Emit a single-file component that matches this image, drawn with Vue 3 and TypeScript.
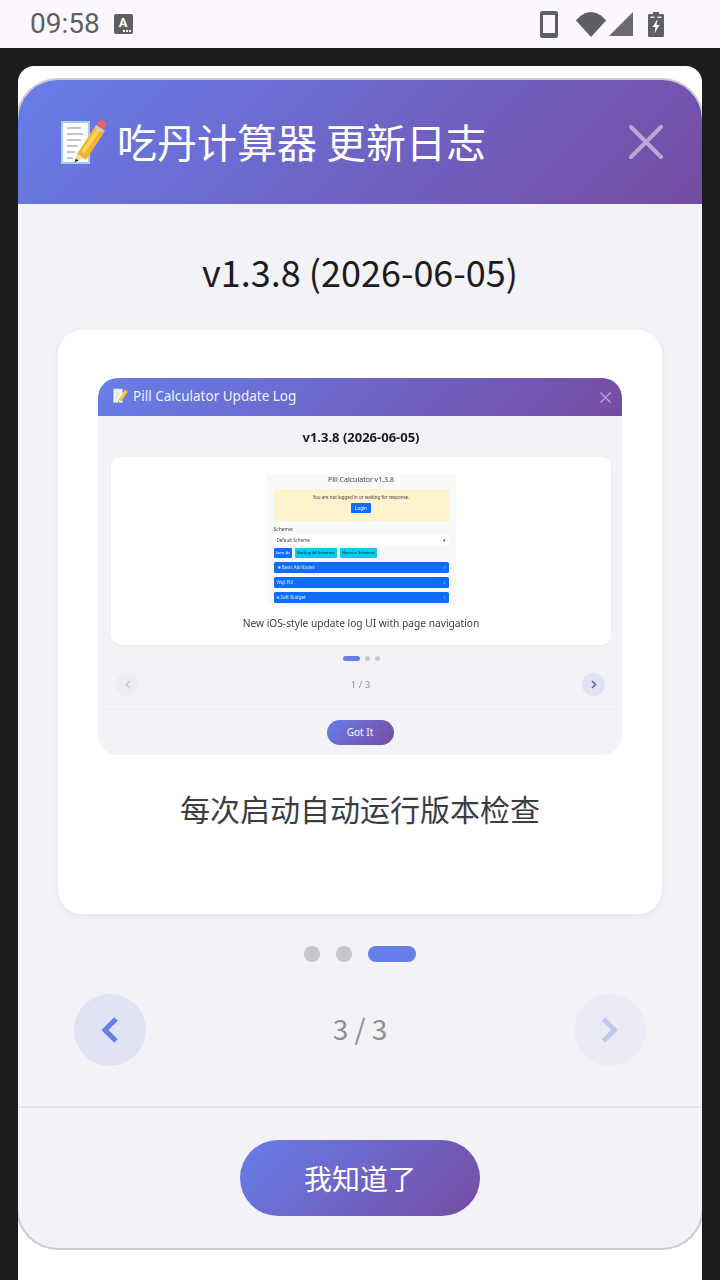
<script setup lang="ts">
const miniBars = ['★ Basic Attributes', 'Waji Pill', '♣ Soft Budget'];
</script>

<template>
  <div class="screen">
    <svg class="defs" width="0" height="0">
      <symbol id="memo" viewBox="0 0 46 46">
        <rect x="2" y="3" width="27" height="41" fill="#fff" stroke="#9fd3f2" stroke-width="2" />
        <path d="M7 9h14M7 15h16M7 21h14M7 27h11M7 33h8M7 39h6" stroke="#8c8c94" stroke-width="1.2" fill="none" />
        <path d="M17 35 36 6l9 6-19 29z" fill="#f7b32b" />
        <path d="M22 31 38 8l3 2-17 25z" fill="#fcd462" />
        <path d="M17 35l-2.500 8.500 8.500-4z" fill="#f3d9b0" />
        <path d="M14.500 43.500l1.200-4 3 2z" fill="#3a3a3a" />
        <path d="M36 7l3-4.500a3 3 0 0 1 4-1l2 1.300a3 3 0 0 1 1 4l-2.500 4.500z" fill="#e8626a" />
        <path d="M36 6l8.500 5.500-1.300 2.200-8.500-5.500z" fill="#c9ced6" />
      </symbol>
    </svg>

    <header class="status">
      <div class="status-left">
        <span class="clock">09:58</span>
        <span class="ime">A<i class="ime-dots"></i></span>
      </div>
      <div class="status-right">
        <svg class="ic-phone" width="18" height="27" viewBox="0 0 18 27">
          <path fill-rule="evenodd" d="M2.500 0h13A2.500 2.500 0 0 1 18 2.500v22a2.500 2.500 0 0 1-2.500 2.500h-13A2.500 2.500 0 0 1 0 24.500v-22A2.500 2.500 0 0 1 2.500 0zM3 4v18h12V4z" fill="#5f5f62" />
        </svg>
        <svg class="ic-wifi" width="30" height="25" viewBox="0 0 30 25">
          <path d="M0 8.500C4 3.500 9.500 0 15 0s11 3.500 15 8.500L15 25z" fill="#5f5f62" />
        </svg>
        <svg class="ic-signal" width="24" height="24" viewBox="0 0 24 24">
          <path d="M24 0v24H0z" fill="#6b6b6e" />
        </svg>
        <svg class="ic-battery" width="16" height="25" viewBox="0 0 16 25">
          <path d="M5 0h6v2h3.500A1.500 1.500 0 0 1 16 3.500v20a1.500 1.500 0 0 1-1.500 1.500h-13A1.500 1.500 0 0 1 0 23.500v-20A1.500 1.500 0 0 1 1.500 2H5z" fill="#5f5f62" />
          <path d="M9.500 7 4.500 15h3l-1 6.500 5-8.500h-3z" fill="#fff" />
          <path d="M2.500 4.500h4v1.500h-4zM9.500 4.500h4v1.500h-4z" fill="#fff" opacity=".85" />
        </svg>
      </div>
    </header>

    <main class="stage">
      <div class="panel">
        <section class="modal">
          <div class="modal-head">
            <div class="modal-title">
              <svg class="memo" width="46" height="46"><use href="#memo" /></svg>
              <span class="modal-name">吃丹计算器 更新日志</span>
            </div>
            <svg class="close" width="34" height="34" viewBox="0 0 34 34">
              <path d="M2 2l30 30M32 2 2 32" stroke="#fff" stroke-opacity=".5" stroke-width="4" stroke-linecap="round" />
            </svg>
          </div>

          <div class="modal-body">
            <h2 class="version">v1.3.8 (2026-06-05)</h2>

            <div class="card">
              <div class="shot">
                <div class="shot-head">
                  <div class="shot-title">
                    <svg width="15" height="15"><use href="#memo" /></svg>
                    <span>Pill Calculator Update Log</span>
                  </div>
                  <svg width="11" height="11" viewBox="0 0 11 11">
                    <path d="M.5.5l10 10M10.500.5l-10 10" stroke="#fff" stroke-opacity=".55" stroke-width="1.200" />
                  </svg>
                </div>
                <div class="shot-body">
                  <div class="shot-version">v1.3.8 (2026-06-05)</div>
                  <div class="shot-card">
                    <div class="tiny">
                      <div class="tiny-title">Pill Calculator v1.3.8</div>
                      <div class="tiny-alert">
                        <span>You are not logged in or waiting for response.</span>
                        <b class="tiny-login">Login</b>
                      </div>
                      <div class="tiny-label">Scheme:</div>
                      <div class="tiny-select"><span>Default Scheme</span><span>▾</span></div>
                      <div class="tiny-row">
                        <b class="tiny-btn blue">Save As</b>
                        <b class="tiny-btn cyan wide">Backup All Schemes</b>
                        <b class="tiny-btn cyan">Restore Schemes</b>
                      </div>
                      <div class="tiny-bars">
                        <div v-for="bar in miniBars" :key="bar" class="tiny-bar">
                          <span>{{ bar }}</span><span>›</span>
                        </div>
                      </div>
                    </div>
                    <p class="shot-caption">New iOS-style update log UI with page navigation</p>
                  </div>
                  <div class="shot-dots">
                    <i class="shot-dot on"></i><i class="shot-dot"></i><i class="shot-dot"></i>
                  </div>
                  <div class="shot-nav">
                    <span class="shot-arrow off">
                      <svg width="8" height="9" viewBox="0 0 8 9"><path d="M6 1 2.500 4.500 6 8" stroke="#667eea" stroke-width="1.700" fill="none" /></svg>
                    </span>
                    <span class="shot-page">1 / 3</span>
                    <span class="shot-arrow">
                      <svg width="8" height="9" viewBox="0 0 8 9"><path d="M2 1l3.500 3.500L2 8" stroke="#5a67c9" stroke-width="1.700" fill="none" /></svg>
                    </span>
                  </div>
                </div>
                <div class="shot-foot"><span class="shot-btn">Got It</span></div>
              </div>
              <p class="caption">每次启动自动运行版本检查</p>
            </div>

            <div class="dots">
              <i class="dot"></i><i class="dot"></i><i class="dot on"></i>
            </div>

            <div class="nav">
              <button class="arrow">
                <svg width="24" height="30" viewBox="0 0 24 30"><path d="M18 4 7 15l11 11" stroke="#667eea" stroke-width="5" fill="none" /></svg>
              </button>
              <span class="page">3 / 3</span>
              <button class="arrow off">
                <svg width="24" height="30" viewBox="0 0 24 30"><path d="M5.500 4l11 11-11 11" stroke="#667eea" stroke-width="5" fill="none" /></svg>
              </button>
            </div>
          </div>

          <div class="modal-foot">
            <button class="ok">我知道了</button>
          </div>
        </section>
      </div>
    </main>
  </div>
</template>

<style>
html,
body {
  margin: 0;
  background: #1c1c1c;
}
</style>

<style scoped>
.screen {
  width: 720px;
  height: 1280px;
  display: flex;
  flex-direction: column;
  overflow: hidden;
  background: #1c1c1c;
  font-family: "Noto Sans CJK SC", "Noto Sans", sans-serif;
}

.defs {
  position: absolute;
}

.status {
  height: 48px;
  flex: none;
  display: flex;
  align-items: center;
  justify-content: space-between;
  padding: 0 56px 0 30px;
  background: #fdf7fe;
}

.status-left {
  display: flex;
  align-items: center;
  gap: 14px;
}

.clock {
  font-family: Roboto, sans-serif;
  font-size: 28px;
  line-height: 48px;
  color: #5f5f62;
}

.ime {
  position: relative;
  width: 19px;
  height: 20px;
  border-radius: 2px;
  background: #5f5f62;
  color: #fff;
  font-family: Roboto, sans-serif;
  font-size: 13px;
  font-weight: 700;
  line-height: 17px;
  text-align: center;
}

.ime-dots {
  position: absolute;
  right: 2px;
  bottom: 2px;
  width: 2px;
  height: 2px;
  background: #fff;
  box-shadow: -3px 0 0 #fff, -6px 0 0 #fff;
}

.status-right {
  display: flex;
  align-items: center;
}

.ic-wifi {
  margin-left: 18px;
}

.ic-signal {
  margin-left: 3px;
}

.ic-battery {
  margin-left: 15px;
}

.stage {
  flex: 1;
  display: flex;
  padding: 18px 18px 0;
}

.panel {
  flex: 1;
  padding-top: 14px;
  overflow: hidden;
  border-radius: 16px 16px 0 0;
  background: #fff;
}

.modal {
  height: 1168px;
  display: flex;
  flex-direction: column;
  overflow: hidden;
  border-radius: 40px;
  background: #f2f2f7;
  box-shadow: 0 0 0 2px #cbcbd2;
}

.modal-head {
  height: 124px;
  flex: none;
  display: flex;
  align-items: center;
  justify-content: space-between;
  padding: 0 39px 0 42px;
  background: linear-gradient(135deg, #667eea 0%, #764ba2 100%);
}

.modal-title {
  display: flex;
  align-items: center;
  gap: 11px;
  color: #fff;
  font-size: 40px;
  line-height: 56px;
}

.modal-name {
  padding-bottom: 2px;
}

.modal-body {
  flex: 1;
  display: flex;
  flex-direction: column;
  padding: 42px 40px 0;
}

.version {
  margin: 0;
  font-size: 36px;
  font-weight: 400;
  line-height: 50px;
  text-align: center;
  color: #1c1c1e;
}

.card {
  height: 584px;
  flex: none;
  margin-top: 34px;
  padding-top: 48px;
  box-sizing: border-box;
  display: flex;
  flex-direction: column;
  align-items: center;
  border-radius: 24px;
  background: #fff;
  box-shadow: 0 2px 8px rgba(0, 0, 0, 0.06);
}

.caption {
  margin: 34px 0 0;
  font-size: 30px;
  line-height: 38px;
  color: #3c3c43;
}

.dots {
  display: flex;
  justify-content: center;
  gap: 16px;
  margin-top: 32px;
}

.dot {
  width: 16px;
  height: 16px;
  border-radius: 8px;
  background: #c7c7cc;
}

.dot.on {
  width: 48px;
  background: #667eea;
}

.nav {
  display: flex;
  align-items: center;
  justify-content: space-between;
  margin-top: 32px;
  padding: 0 16px;
}

.arrow {
  width: 72px;
  height: 72px;
  display: flex;
  align-items: center;
  justify-content: center;
  padding: 0;
  border: 0;
  border-radius: 50%;
  background: rgba(102, 126, 234, 0.12);
}

.arrow.off {
  opacity: 0.35;
}

.page {
  padding-bottom: 4px;
  font-size: 28px;
  color: #8e8e93;
}

.modal-foot {
  flex: none;
  display: flex;
  justify-content: center;
  padding: 32px 0;
  border-top: 2px solid #e5e5ea;
}

.ok {
  width: 240px;
  height: 76px;
  padding: 0;
  border: 0;
  border-radius: 38px;
  background: linear-gradient(135deg, #667eea 0%, #764ba2 100%);
  color: #fff;
  font-family: inherit;
  font-size: 28px;
}

/* the update log screenshot inside the card */
.shot {
  width: 524px;
  height: 377px;
  flex: none;
  display: flex;
  flex-direction: column;
  overflow: hidden;
  border-radius: 20px;
  background: #f2f2f7;
  font-family: "Noto Sans", sans-serif;
  filter: blur(0.35px);
}

.shot-head {
  height: 38px;
  flex: none;
  display: flex;
  align-items: center;
  justify-content: space-between;
  padding: 0 11px 0 15px;
  background: linear-gradient(135deg, #667eea 0%, #764ba2 100%);
}

.shot-title {
  display: flex;
  align-items: center;
  gap: 5px;
  color: rgba(255, 255, 255, 0.92);
  font-size: 13.500px;
  line-height: 18px;
  margin-top: -3px;
}

.shot-body {
  flex: 1;
  padding: 11px 11px 0 13px;
}

.shot-version {
  font-size: 13px;
  font-weight: 700;
  line-height: 20px;
  text-align: center;
  color: #1c1c1e;
}

.shot-card {
  height: 188px;
  margin-top: 10px;
  padding-top: 17px;
  box-sizing: border-box;
  display: flex;
  flex-direction: column;
  align-items: center;
  border-radius: 10px;
  background: #fff;
  box-shadow: 0 1px 3px rgba(0, 0, 0, 0.04);
}

.shot-caption {
  margin: 8px 0 0;
  font-size: 10.200px;
  line-height: 20px;
  color: #3c3c43;
}

.shot-dots {
  display: flex;
  justify-content: center;
  gap: 5px;
  margin-top: 11px;
}

.shot-dot {
  width: 5px;
  height: 5px;
  border-radius: 3px;
  background: #c7c7cc;
}

.shot-dot.on {
  width: 17px;
  background: #667eea;
}

.shot-nav {
  display: flex;
  align-items: center;
  justify-content: space-between;
  margin-top: 12px;
  padding: 0 6px 0 5px;
}

.shot-arrow {
  width: 23px;
  height: 23px;
  display: flex;
  align-items: center;
  justify-content: center;
  border-radius: 50%;
  background: rgba(102, 126, 234, 0.12);
}

.shot-arrow.off {
  opacity: 0.35;
}

.shot-page {
  font-size: 9.500px;
  color: #8e8e93;
}

.shot-foot {
  flex: none;
  display: flex;
  justify-content: center;
  padding: 10px 0;
  border-top: 1px solid #ececf1;
}

.shot-btn {
  width: 67px;
  height: 25px;
  border-radius: 13px;
  background: linear-gradient(135deg, #667eea 0%, #764ba2 100%);
  color: #fff;
  font-size: 10px;
  line-height: 25px;
  text-align: center;
}

/* tiny app page shown inside the screenshot */
.tiny {
  width: 189px;
  height: 131px;
  flex: none;
  padding: 0 7px;
  box-sizing: border-box;
  display: flex;
  flex-direction: column;
  background: #f8f9fa;
  color: #444;
  font-size: 4.500px;
}

.tiny-title {
  height: 15px;
  font-size: 7px;
  line-height: 11px;
  text-align: center;
}

.tiny-alert {
  height: 32px;
  flex: none;
  box-sizing: border-box;
  padding-top: 5px;
  display: flex;
  flex-direction: column;
  align-items: center;
  gap: 3px;
  background: #fff3cd;
  border-radius: 2px;
  line-height: 6px;
}

.tiny-login {
  width: 20px;
  height: 10px;
  border-radius: 1px;
  background: #0d6efd;
  color: #fff;
  font-weight: 400;
  line-height: 10px;
  text-align: center;
}

.tiny-label {
  margin-top: 3px;
  font-size: 5px;
  line-height: 10px;
}

.tiny-select {
  height: 10px;
  margin-top: 1px;
  padding: 0 3px;
  display: flex;
  justify-content: space-between;
  background: #fff;
  line-height: 10px;
}

.tiny-row {
  display: flex;
  gap: 3px;
  margin-top: 3px;
}

.tiny-btn {
  height: 10px;
  padding: 0 2px;
  border-radius: 1px;
  font-weight: 400;
  font-size: 4.100px;
  line-height: 10px;
  white-space: nowrap;
}

.tiny-btn.blue {
  background: #0d6efd;
  color: #fff;
}

.tiny-btn.cyan {
  background: #0dcaf0;
  color: #123;
}

.tiny-bars {
  display: flex;
  flex-direction: column;
  gap: 4px;
  margin-top: 4px;
}

.tiny-bar {
  height: 11px;
  padding: 0 3px;
  display: flex;
  justify-content: space-between;
  border-radius: 1.500px;
  background: #0d6efd;
  color: rgba(255, 255, 255, 0.85);
  line-height: 11px;
}
</style>
